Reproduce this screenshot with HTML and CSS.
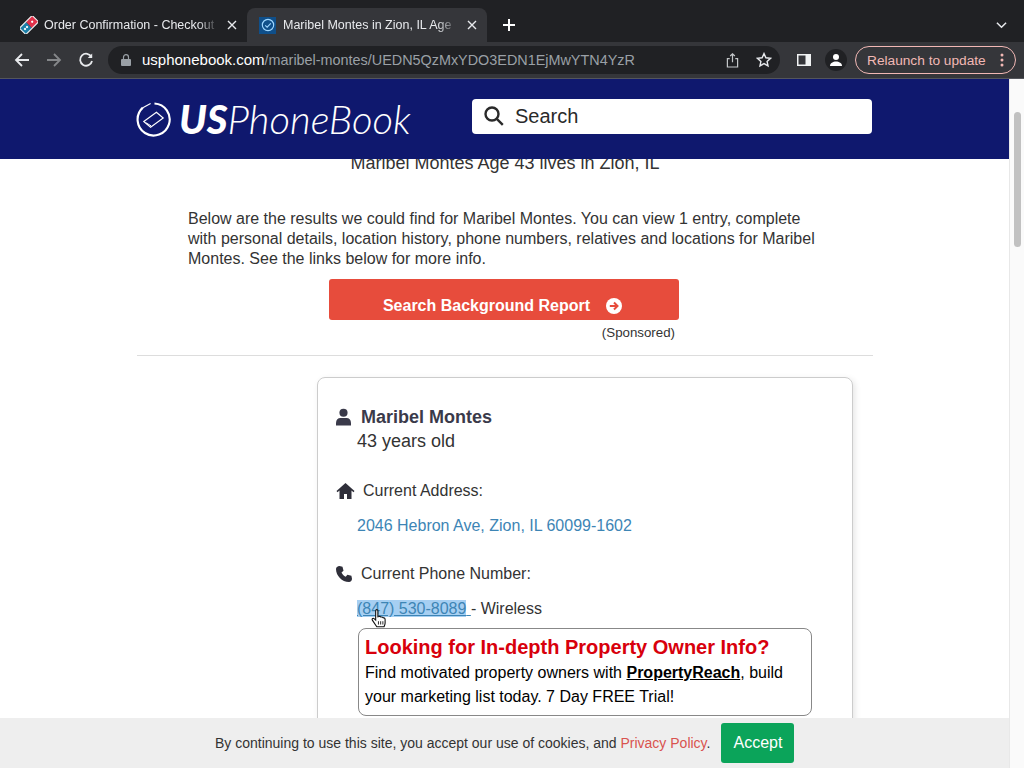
FILE: index.html
```html
<!DOCTYPE html>
<html lang="en">
<head>
    <meta charset="UTF-8">
    <meta name="viewport" content="width=device-width, initial-scale=1.0">
    <title>Maribel Montes in Zion, IL</title>
    <link rel="stylesheet" href="styles.css">
</head>
<body>
    <div class="tab-strip">
        <div class="tab">
            <svg class="favicon" viewBox="0 0 16 16" width="18" height="18">
                <g transform="rotate(-45 8 8)">
                    <rect x="0" y="4" width="8" height="8" fill="#1b7fa8"/>
                    <rect x="8" y="4" width="8" height="8" fill="#e0324b"/>
                    <rect x="0" y="4" width="16" height="8" fill="none" stroke="#eee" stroke-width="1"/>
                    <circle cx="3" cy="8" r="1" fill="#fff"/>
                    <circle cx="5.5" cy="8" r="1" fill="#fff"/>
                    <circle cx="12" cy="8" r="1" fill="#fff"/>
                </g>
            </svg>
            <span class="tab-title">Order Confirmation - Checkout</span>
            <svg class="tab-close" viewBox="0 0 10 10" width="10" height="10" fill="none" stroke="#e8eaed" stroke-width="1.4">
                <path d="M1 1l8 8M9 1l-8 8"/>
            </svg>
        </div>
        <div class="tab active">
            <span class="favicon-box">
                <svg viewBox="0 0 16 16" width="14" height="14" fill="none" stroke="#9fd6ff" stroke-width="1.3">
                    <circle cx="8" cy="8" r="6.5"/>
                    <path d="M4.8 8.4l2.2 2 4.2-4.2"/>
                </svg>
            </span>
            <span class="tab-title">Maribel Montes in Zion, IL Age</span>
            <svg class="tab-close" viewBox="0 0 10 10" width="10" height="10" fill="none" stroke="#e8eaed" stroke-width="1.4">
                <path d="M1 1l8 8M9 1l-8 8"/>
            </svg>
        </div>
        <svg class="new-tab" viewBox="0 0 12 12" width="12" height="12" stroke="#fff" stroke-width="2">
            <path d="M6 0v12M0 6h12"/>
        </svg>
        <svg class="tab-menu" viewBox="0 0 12 8" width="11" height="8" fill="none" stroke="#e8eaed" stroke-width="1.6">
            <path d="M1 1.5l5 5 5-5"/>
        </svg>
    </div>

    <div class="toolbar">
        <svg class="nav-icon" viewBox="0 0 16 16" width="16" height="16" fill="none" stroke="#e8eaed" stroke-width="1.8">
            <path d="M15 8H2M8 2L2 8l6 6"/>
        </svg>
        <svg class="nav-icon" viewBox="0 0 16 16" width="16" height="16" fill="none" stroke="#85878a" stroke-width="1.8">
            <path d="M1 8h13M8 2l6 6-6 6"/>
        </svg>
        <svg class="nav-icon" viewBox="0 0 16 16" width="16" height="16" fill="none" stroke="#e8eaed" stroke-width="1.8">
            <path d="M13.5 5A6 6 0 1 0 14 9"/>
            <path d="M14.2 1.5v4.4H9.8z" stroke="none" fill="#e8eaed"/>
        </svg>
        <div class="omnibox">
            <svg viewBox="0 0 10 12" width="10" height="12" fill="#9aa0a6">
                <path d="M1 5h8a1 1 0 0 1 1 1v5a1 1 0 0 1-1 1H1a1 1 0 0 1-1-1V6a1 1 0 0 1 1-1z"/>
                <path d="M2.5 5V3.2a2.5 2.5 0 0 1 5 0V5" fill="none" stroke="#9aa0a6" stroke-width="1.2"/>
            </svg>
            <span class="url"><span class="url-host">usphonebook.com</span>/maribel-montes/UEDN5QzMxYDO3EDN1EjMwYTN4YzR</span>
            <svg class="share" viewBox="0 0 14 16" width="13" height="15" fill="none" stroke="#c4c7c9" stroke-width="1.3">
                <path d="M4 6H1.5v9h11V6H10M7 10V1M4.5 3.2L7 .8l2.5 2.4"/>
            </svg>
            <svg viewBox="0 0 16 16" width="16" height="16" fill="none" stroke="#e8eaed" stroke-width="1.4">
                <path d="M8 1.6l1.9 4.2 4.6.5-3.4 3.1.9 4.500L8 11.600l-4 2.300.9-4.500L1.500 6.300l4.600-.5z"/>
            </svg>
        </div>
        <svg class="panel-icon" viewBox="0 0 14 12" width="14" height="12">
            <rect width="14" height="12" fill="#f1f3f4"/>
            <rect x="1.500" y="1.500" width="7" height="9" fill="#35363a"/>
        </svg>
        <span class="avatar">
            <svg viewBox="0 0 14 14" width="14" height="14" fill="#fff">
                <circle cx="7" cy="4" r="3"/>
                <path d="M1 13c0-3 3-4.500 6-4.500s6 1.500 6 4.500z"/>
            </svg>
        </span>
        <div class="relaunch">
            <span>Relaunch to update</span>
            <svg viewBox="0 0 4 14" width="4" height="14" fill="#f2b8b5">
                <circle cx="2" cy="2" r="1.500"/>
                <circle cx="2" cy="7" r="1.500"/>
                <circle cx="2" cy="12" r="1.500"/>
            </svg>
        </div>
    </div>

    <div class="viewport">
        <div class="page">
            <div class="site-header">
                <div class="logo">
                    <svg viewBox="0 0 36 36" width="35" height="35" fill="none" stroke="#fff" stroke-width="2.200">
                        <path d="M19 1.500A16.500 16.500 0 1 1 7 5.800"/>
                        <path d="M7 5.800L15 1.500" stroke-width="1.200"/>
                        <path d="M8 20L21 10.500l7 6L15 26z" stroke-width="1.200"/>
                        <path d="M10.500 21.500l5 3" stroke-width="1"/>
                    </svg>
                    <span class="logo-text"><b>US</b>PhoneBook</span>
                </div>
                <div class="search-box">
                    <svg viewBox="0 0 20 20" width="20" height="20" fill="none" stroke="#2a2a2a" stroke-width="2.400">
                        <circle cx="8" cy="8" r="6.500"/>
                        <path d="M12.800 12.800l6 6"/>
                    </svg>
                    <span>Search</span>
                </div>
            </div>

            <div class="content">
                <h1 class="subtitle">Maribel Montes Age 43 lives in Zion, IL</h1>
                <p class="intro">Below are the results we could find for Maribel Montes. You can view 1 entry, complete with personal details, location history, phone numbers, relatives and locations for Maribel Montes. See the links below for more info.</p>
                <a class="report-btn" href="#">
                    Search Background Report
                    <svg viewBox="0 0 16 16" width="16" height="16">
                        <circle cx="8" cy="8" r="8" fill="#fff"/>
                        <path d="M3.800 8h7.500M8 4.500L11.500 8 8 11.500" fill="none" stroke="#e74c3c" stroke-width="2"/>
                    </svg>
                </a>
                <div class="sponsored">(Sponsored)</div>
                <hr class="divider">

                <div class="person-card">
                    <div class="row name-row">
                        <svg viewBox="0 0 14 16" width="15" height="18" fill="#3a3a4a">
                            <circle cx="7" cy="4" r="3.800"/>
                            <path d="M0 16v-2.500C0 10.500 2 9 4 9h6c2 0 4 1.500 4 4.500V16z"/>
                        </svg>
                        <span class="name">Maribel Montes</span>
                    </div>
                    <div class="age">43 years old</div>

                    <div class="row address-row">
                        <svg viewBox="0 0 18 16" width="19" height="16" fill="#2f2f3a">
                            <path d="M9 0L0 8l1 1.200 2-1.700V16h4.500v-5h3v5H15V7.500l2 1.700L18 8z"/>
                        </svg>
                        <span>Current Address:</span>
                    </div>
                    <a class="address-link" href="#">2046 Hebron Ave, Zion, IL 60099-1602</a>

                    <div class="row phone-row">
                        <svg viewBox="0 0 16 16" width="16" height="16" fill="#2f2f3a">
                            <path d="M3.500 0l3 .8 1 4-2 1.700c.9 1.900 2.200 3.200 4.200 4.200l1.700-2 4 1 .6 3c0 1.700-1.200 3.300-3 3.300C6 16 0 9.800 0 3 0 1.400 1.500 0 3.500 0z"/>
                        </svg>
                        <span>Current Phone Number:</span>
                    </div>
                    <div class="phone-line">
                        <span class="phone-wrap"><a class="phone-link" href="#"><span class="selected">(847) 530-8089</span> </a>
                            <svg class="hand-cursor" viewBox="0 0 14 18" width="16" height="20">
                                <path d="M4 1.500c0-1.300 2-1.300 2 0V7l1-.3c.5-.2 1.200 0 1.500.4l1 .1c.6 0 1 .3 1.200.6l.8.2c.8.200 1 .8 1 1.500v3c0 1.300-.5 2.200-1 3.500H5L1 10c-.6-.9.300-2.100 1.300-1.500L4 10z" fill="#fff" stroke="#111" stroke-width="1"/>
                                <path d="M6.500 11v3M8.500 11v3M10.500 11v3" stroke="#111" stroke-width=".8"/>
                            </svg>
                        </span>- Wireless
                    </div>

                    <div class="promo">
                        <div class="promo-title">Looking for In-depth Property Owner Info?</div>
                        <div class="promo-body">Find motivated property owners with <a href="#">PropertyReach</a>, build your marketing list today. 7 Day FREE Trial!</div>
                    </div>
                </div>
            </div>

            <div class="cookie-bar">
                <span>By continuing to use this site, you accept our use of cookies, and <a href="#">Privacy Policy</a>.</span>
                <button class="accept-btn" type="button">Accept</button>
            </div>
        </div>

        <div class="scrollbar"><div class="scroll-thumb"></div></div>
    </div>
</body>
</html>
```

FILE: styles.css
```css
* {
    box-sizing: border-box;
}

html, body {
    height: 100%;
}

body {
    margin: 0;
    display: flex;
    flex-direction: column;
    overflow: hidden;
    font-family: "Liberation Sans", Arial, Helvetica, sans-serif;
    background-color: #202124;
}

/* browser tabs */
.tab-strip {
    height: 42px;
    flex: none;
    display: flex;
    align-items: flex-end;
    padding-left: 8px;
    background-color: #202124;
}

.tab {
    width: 239px;
    height: 34px;
    display: flex;
    align-items: center;
    gap: 6px;
    padding: 0 10px 0 12px;
    color: #e8eaed;
    font-size: 12.5px;
}

.tab.active {
    width: 240px;
    gap: 7px;
    background-color: #35363a;
    border-radius: 8px 8px 0 0;
}

.favicon {
    flex: none;
}

.favicon-box {
    flex: none;
    width: 17px;
    height: 17px;
    display: flex;
    align-items: center;
    justify-content: center;
    background-color: #0f4f8a;
}

.tab-title {
    flex: 1;
    min-width: 0;
    white-space: nowrap;
    -webkit-mask-image: linear-gradient(to right, #000 88%, transparent 100%);
    mask-image: linear-gradient(to right, #000 88%, transparent 100%);
}

.tab-close {
    flex: none;
    margin-left: 2px;
}

.new-tab {
    margin: 0 0 11px 16px;
}

.tab-menu {
    margin: 0 17px 13px auto;
}

/* browser toolbar */
.toolbar {
    height: 37px;
    flex: none;
    display: flex;
    align-items: center;
    padding-left: 14px;
    background-color: #35363a;
    border-bottom: 1px solid #54565c;
}

.nav-icon {
    flex: none;
    margin-right: 16px;
}

.omnibox {
    flex: none;
    width: 672px;
    height: 28px;
    margin-left: -2px;
    display: flex;
    align-items: center;
    padding: 0 8px 0 13px;
    background-color: #202124;
    border-radius: 14px;
}

.url {
    flex: 1;
    margin-left: 11px;
    margin-bottom: 1px;
    color: #9aa0a6;
    font-size: 14.4px;
    white-space: nowrap;
}

.url-host {
    color: #fff;
    font-size: 15px;
}

.share {
    margin-right: 17px;
}

.panel-icon {
    flex: none;
    margin-left: 17px;
}

.avatar {
    flex: none;
    width: 22px;
    height: 22px;
    margin-left: 14px;
    display: flex;
    align-items: center;
    justify-content: center;
    border-radius: 50%;
    background-color: #202124;
}

.relaunch {
    flex: none;
    width: 161px;
    height: 28px;
    margin-left: 8px;
    display: flex;
    align-items: center;
    justify-content: space-between;
    padding: 0 11px 0 11px;
    color: #f2b8b5;
    font-size: 13.7px;
    border: 1px solid #f2b8b5;
    border-radius: 14px;
}

/* page */
.viewport {
    flex: 1;
    min-height: 0;
    display: flex;
    background-color: #fff;
}

.page {
    flex: 1;
    min-width: 0;
    display: flex;
    flex-direction: column;
    position: relative;
    overflow: hidden;
    color: #333;
}

.site-header {
    height: 80px;
    flex: none;
    display: flex;
    align-items: center;
    position: relative;
    z-index: 2;
    padding-left: 136px;
    background-color: #0f186e;
}

.logo {
    width: 336px;
    display: flex;
    align-items: center;
    gap: 8px;
}

.logo-text {
    color: #fff;
    font-family: Lato, "Open Sans", sans-serif;
    font-size: 40px;
    font-style: italic;
    font-weight: 300;
    line-height: 44px;
}

.logo-text b {
    font-weight: 900;
}

.search-box {
    width: 400px;
    height: 35px;
    margin-bottom: 6px;
    display: flex;
    align-items: center;
    gap: 11px;
    padding-left: 12px;
    font-size: 20px;
    color: #2a2a2a;
    background-color: #fff;
    border-radius: 4px;
}

.content {
    width: 736px;
    margin-left: 137px;
    margin-top: -6px;
}

.subtitle {
    margin: 0;
    font-size: 18px;
    font-weight: normal;
    line-height: 20px;
    text-align: center;
}

.intro {
    margin: 36px 40px 0 51px;
    font-size: 16px;
    line-height: 20px;
}

.report-btn {
    width: 350px;
    height: 41px;
    margin: 10px 0 0 192px;
    display: flex;
    align-items: center;
    justify-content: center;
    gap: 16px;
    padding: 12px 3px 0 0;
    color: #fff;
    font-size: 16px;
    font-weight: bold;
    text-decoration: none;
    background-color: #e74c3c;
    border-radius: 3px;
}

.sponsored {
    margin: 5px 198px 0 0;
    font-size: 13.3px;
    line-height: 16px;
    text-align: right;
}

.divider {
    margin: 14px 0 21px;
    border: none;
    border-top: 1px solid #ddd;
}

.person-card {
    width: 536px;
    height: 500px;
    margin-left: 180px;
    padding: 27px 40px 0 18px;
    border: 1px solid #ccc;
    border-radius: 8px;
    box-shadow: 2px 2px 6px rgba(0, 0, 0, 0.1);
    font-size: 16px;
}

.row {
    display: flex;
    align-items: center;
}

.name-row {
    gap: 10px;
    height: 24px;
}

.name {
    font-size: 18px;
    font-weight: bold;
    color: #3a3a4a;
}

.age {
    margin-left: 21px;
    font-size: 18px;
    line-height: 24px;
}

.address-row {
    gap: 8px;
    height: 20px;
    margin-top: 28px;
}

.address-link {
    display: block;
    margin: 15px 0 0 21px;
    line-height: 20px;
    color: #3d85b5;
    text-decoration: none;
}

.phone-row {
    gap: 9px;
    height: 20px;
    margin-top: 28px;
}

.phone-line {
    margin: 15px 0 0 21px;
    line-height: 20px;
}

.phone-wrap {
    position: relative;
}

.phone-link {
    color: #3d85b5;
}

.selected {
    background-color: #a6cff2;
}

.hand-cursor {
    position: absolute;
    left: 14px;
    top: 9px;
}

.promo {
    width: 454px;
    height: 88px;
    margin: 9px 0 0 22px;
    padding: 5px 6px;
    color: #000;
    border: 1px solid #888;
    border-radius: 8px;
}

.promo-title {
    font-size: 20px;
    font-weight: bold;
    line-height: 27px;
    color: #d8000c;
}

.promo-body {
    line-height: 24px;
}

.promo-body a {
    color: #000;
    font-weight: bold;
}

.cookie-bar {
    position: absolute;
    left: 0;
    right: 0;
    bottom: 0;
    height: 50px;
    z-index: 3;
    display: flex;
    align-items: center;
    gap: 11px;
    padding-left: 215px;
    font-size: 14px;
    background-color: #eee;
}

.cookie-bar a {
    color: #d9534f;
    text-decoration: none;
}

.accept-btn {
    width: 73px;
    height: 40px;
    padding: 0;
    color: #fff;
    font-family: inherit;
    font-size: 16px;
    background-color: #0ba45a;
    border: none;
    border-radius: 3px;
}

.scrollbar {
    width: 15px;
    flex: none;
    padding: 33px 3px 0 4px;
    background-color: #fafafa;
    border-left: 1px solid #e8e8e8;
}

.scroll-thumb {
    height: 135px;
    background-color: #c1c1c1;
    border-radius: 4px;
}
```
